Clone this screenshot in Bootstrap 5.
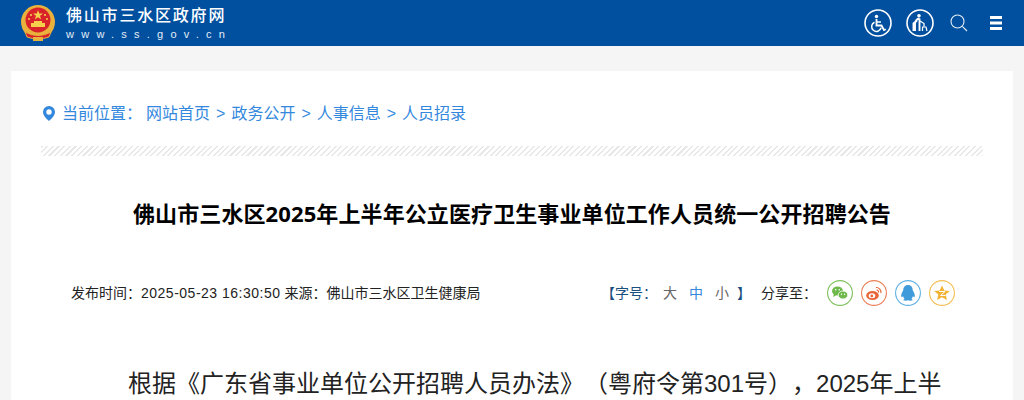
<!DOCTYPE html>
<html lang="zh-CN">
<head>
<meta charset="UTF-8">
<title>佛山市三水区政府网</title>
<link rel="stylesheet" href="https://cdn.jsdelivr.net/npm/bootstrap@5.3.3/dist/css/bootstrap.min.css">
<style>
html, body { height: 400px; overflow: hidden; }
body {
    background: #f5f5f5;
    font-family: "Liberation Sans", "Noto Sans CJK SC", sans-serif;
    color: #000;
    text-spacing-trim: space-all;
}
.top-bar { height: 46px; background: #01509f; padding: 0 21px 0 20px; }
.site-name { font-size: 16px; line-height: 18px; color: #fff; font-weight: 500; letter-spacing: 1.8px; margin-top: 1px; }
.site-url { font-size: 11px; line-height: 12px; color: #e4edf6; letter-spacing: 7.25px; margin-top: 3px; white-space: nowrap; }
.brand-text { margin-left: 10px; }
.top-tools { gap: 14px; }
.tool-search { margin-left: 1px; }
.tool-menu { margin-left: 6px; }
.sheet { margin: 25px 11px 0; background: #fff; padding: 0 30px; height: 329px; overflow: hidden; }
.crumbs { padding-top: 33px; height: 75px; font-size: 16px; line-height: 20px; color: #3388dd; }
.crumbs a { color: #3388dd; text-decoration: none; }
.crumbs .sep { margin: 0 6px; }
.crumbs .here { margin-right: 4px; }
.pin { margin: 2px 7px 0 2px; }
.hatch {
    height: 10px;
    background: repeating-linear-gradient(135deg, #e8e8e8 0, #e8e8e8 1.5px, #fff 1.5px, #fff 4px);
}
.art-title { font-family: "Noto Sans", "Noto Sans CJK SC", sans-serif; font-size: 22px; line-height: 30px; font-weight: 700; letter-spacing: .1px; text-align: center; margin: 42px 0 0; }
.art-meta { margin-top: 52px; padding: 0 28px 0 30px; font-size: 14px; line-height: 26px; color: #222; }
.stamp { letter-spacing: .5px; }
.size-pick { color: #1a4f80; margin-right: 10px; }
.size-pick span { color: #666; margin-left: 6px; }
.size-pick span.on { color: #3388dd; margin-left: 12px; }
.size-pick span.low { margin-left: 12px; }
.size-pick .tail { color: #1a4f80; margin-left: 8px; }
.share-icons { gap: 8px; margin-left: 10px; }
.share-icons svg { display: block; }
.art-body { margin: 58px 11px 0; font-size: 24px; line-height: 40px; text-indent: 76px; color: #222; height: 40px; white-space: nowrap; }
</style>
</head>
<body>
<header class="top-bar d-flex align-items-center justify-content-between">
    <div class="d-flex align-items-center">
        <svg width="36" height="38" viewBox="0 0 36 38">
            <circle cx="18" cy="18" r="17" fill="#eab23c"/>
            <circle cx="18" cy="16" r="12.500" fill="#d8232a"/>
            <polygon points="18,6 19.200,9.600 23,9.600 20,11.800 21.100,15.400 18,13.200 14.900,15.400 16,11.800 13,9.600 16.800,9.600" fill="#f6d04d"/>
            <circle cx="11" cy="11" r="1.100" fill="#f6d04d"/>
            <circle cx="25" cy="11" r="1.100" fill="#f6d04d"/>
            <circle cx="9" cy="15" r="1" fill="#f6d04d"/>
            <circle cx="27" cy="15" r="1" fill="#f6d04d"/>
            <path d="M11 23h14v-4h-3v-2h-8v2h-3z" fill="#f6d04d"/>
            <path d="M5 28 Q18 35 31 28 L29 33 Q18 37 7 33Z" fill="#d8232a" stroke="#eab23c" stroke-width="1"/>
            <rect x="13" y="33" width="10" height="4" fill="#eab23c"/>
        </svg>
        <div class="brand-text">
            <div class="site-name">佛山市三水区政府网</div>
            <div class="site-url">www.ss.gov.cn</div>
        </div>
    </div>
    <div class="top-tools d-flex align-items-center">
        <svg width="28" height="28" viewBox="0 0 28 28" fill="none" stroke="#fff">
            <circle cx="14" cy="14" r="13" stroke-width="1.600"/>
            <circle cx="12.500" cy="7.500" r="1.700" fill="#fff" stroke="none"/>
            <path d="M12.500 10v6.500h5l2.500 4.500 1.800-.8" stroke-width="1.800"/>
            <path d="M12.500 13h4.500" stroke-width="1.500"/>
            <path d="M10.500 13.200a4.800 4.800 0 1 0 6.600 5.600" stroke-width="1.500"/>
        </svg>
        <svg width="28" height="28" viewBox="0 0 28 28" fill="none" stroke="#fff">
            <circle cx="14" cy="14" r="13" stroke-width="1.600"/>
            <circle cx="13" cy="6.800" r="1.800" fill="#fff" stroke="none"/>
            <path d="M13.500 9.500 Q9.500 10 9 15v7M13.500 9.500v12.500M11 11.500 L7.500 14.500 7.500 22" stroke-width="1.900"/>
            <path d="M14 12l4 2.500v3" stroke-width="1.300"/>
            <path d="M16.500 22v-4h3.500l1 4" stroke-width="1.200"/>
        </svg>
        <svg class="tool-search" width="20" height="20" viewBox="0 0 20 20" fill="none" stroke="#e6eef7" stroke-width="1.100">
            <circle cx="8.500" cy="8.500" r="6.500"/>
            <path d="M13.300 13.300 L18 18"/>
        </svg>
        <svg class="tool-menu" width="14" height="16" viewBox="0 0 14 16" fill="#fff">
            <rect x="1" y="1" width="12" height="3"/>
            <rect x="1" y="6.500" width="12" height="3"/>
            <rect x="1" y="12" width="12" height="3"/>
        </svg>
    </div>
</header>

<main class="sheet">
    <div class="crumbs d-flex align-items-start">
        <svg class="pin" width="12" height="15" viewBox="0 0 12 15">
            <path fill-rule="evenodd" d="M6 0a6 6 0 0 1 6 6c0 3.500-3.400 6.800-6 9-2.600-2.200-6-5.500-6-9a6 6 0 0 1 6-6zm0 3.300a2.700 2.700 0 1 0 0 5.400 2.700 2.700 0 0 0 0-5.400z" fill="#3388dd"/>
        </svg>
        <span class="here">当前位置：</span>
        <a href="#">网站首页</a><span class="sep">&gt;</span>
        <a href="#">政务公开</a><span class="sep">&gt;</span>
        <a href="#">人事信息</a><span class="sep">&gt;</span>
        <a href="#">人员招录</a>
    </div>
    <div class="hatch"></div>
    <h1 class="art-title">佛山市三水区2025年上半年公立医疗卫生事业单位工作人员统一公开招聘公告</h1>
    <div class="art-meta d-flex align-items-center justify-content-between">
        <div>发布时间：<span class="stamp">2025-05-23 16:30:50</span> 来源：佛山市三水区卫生健康局</div>
        <div class="d-flex align-items-center">
            <div class="size-pick">【字号：<span>大</span><span class="on">中</span><span class="low">小</span><span class="tail">】</span></div>
            <div>分享至：</div>
            <div class="share-icons d-flex">
                <svg width="26" height="26" viewBox="0 0 26 26">
                    <circle cx="13" cy="13" r="12.400" fill="#fff" stroke="#7cc05a" stroke-width="1.100"/>
                    <ellipse cx="10.500" cy="11" rx="5.500" ry="4.600" fill="#6fb84b"/>
                    <path d="M7 14l-1 3 3-1.500z" fill="#6fb84b"/>
                    <ellipse cx="16" cy="15" rx="4.800" ry="4" fill="#6fb84b" stroke="#fff" stroke-width=".8"/>
                    <circle cx="8.700" cy="9.800" r=".8" fill="#fff"/>
                    <circle cx="12.300" cy="9.800" r=".8" fill="#fff"/>
                    <circle cx="14.500" cy="14.200" r=".7" fill="#fff"/>
                    <circle cx="17.500" cy="14.200" r=".7" fill="#fff"/>
                </svg>
                <svg width="26" height="26" viewBox="0 0 26 26">
                    <circle cx="13" cy="13" r="12.400" fill="#fff" stroke="#ec7d55" stroke-width="1.100"/>
                    <ellipse cx="11.500" cy="15.500" rx="6.300" ry="4.500" fill="#e8663a"/>
                    <ellipse cx="11" cy="15.800" rx="3.300" ry="2.500" fill="#fff"/>
                    <circle cx="10.800" cy="16" r="1.400" fill="#e8663a"/>
                    <path d="M15 7.500a4.500 4.500 0 0 1 4.800 5.500M15.500 10a2 2 0 0 1 2 2.500" fill="none" stroke="#e8663a" stroke-width="1.200"/>
                </svg>
                <svg width="26" height="26" viewBox="0 0 26 26">
                    <circle cx="13" cy="13" r="12.400" fill="#fff" stroke="#5cb0e4" stroke-width="1.100"/>
                    <path d="M13 5c3.300 0 4.800 2.600 4.800 5.500 1.600 2.500 2.600 5 1.700 6.600-.6.500-1.300-.3-1.700-1-.1 1.300-.7 2.300-1.500 3 1 .3 1.700.8 1.200 1.200-1 .5-3.500.5-4.500 0-1 .5-3.500.5-4.500 0-.5-.4.200-.9 1.200-1.200-.8-.7-1.400-1.700-1.500-3-.4.700-1.100 1.500-1.700 1-.9-1.600.1-4.100 1.700-6.600C8.200 7.600 9.700 5 13 5z" fill="#3f9bd9"/>
                </svg>
                <svg width="26" height="26" viewBox="0 0 26 26">
                    <circle cx="13" cy="13" r="12.400" fill="#fff" stroke="#f3bd52" stroke-width="1.100"/>
                    <polygon points="13,5.500 15.300,10.500 20.800,11 16.700,14.600 17.900,20 13,17.200 8.100,20 9.300,14.600 5.200,11 10.700,10.500" fill="#f2b233"/>
                    <path d="M10 11.500h6l-4.500 4h5" fill="none" stroke="#fff" stroke-width="1"/>
                </svg>
            </div>
        </div>
    </div>
    <p class="art-body">根据《广东省事业单位公开招聘人员办法》（粤府令第301号），2025年上半</p>
</main>
</body>
</html>
